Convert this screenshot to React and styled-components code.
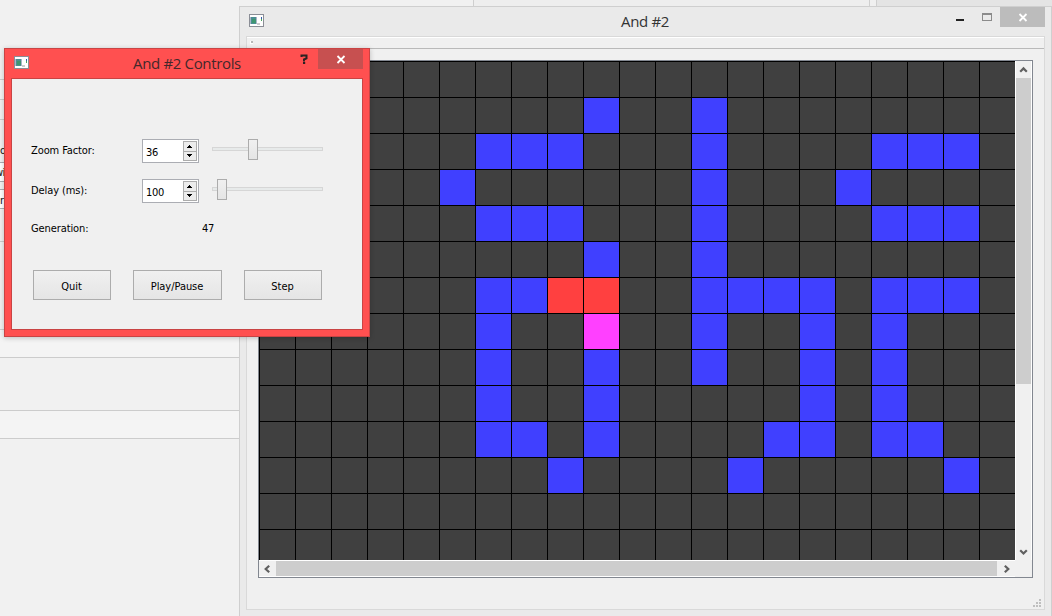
import React from "react";
import styled, { createGlobalStyle } from "styled-components";

const Global = createGlobalStyle`
  * { box-sizing: border-box; }
  body { margin: 0; overflow: hidden; font-family: "DejaVu Sans Condensed", "DejaVu Sans", sans-serif; }
`;

const Desktop = styled.main`
  position: relative;
  width: 1052px;
  height: 616px;
  overflow: hidden;
  background: #f1f1f1;
`;

const Backdrop = styled.div`
  display: flex;
  height: 7px;
`;
const TopStrip = styled.div`
  width: ${(p) => p.$w}px;
  height: 7px;
  background: ${(p) => p.$bg};
  border-right: ${(p) => (p.$line ? "1px solid #cfcfcf" : "0")};
`;
const SideColumn = styled.div`
  width: 240px;
`;
const SideBand = styled.div`
  height: ${(p) => p.$h}px;
  padding-top: ${(p) => p.$pad || 0}px;
  text-indent: ${(p) => p.$indent || 0}px;
  background: ${(p) => p.$bg || "#f1f1f1"};
  border-bottom: 1px solid ${(p) => p.$line || "#cccccc"};
  font-size: 11px;
  line-height: 14px;
  letter-spacing: -0.6px;
  color: #111;
  overflow: hidden;
`;

const Title = styled.div`
  flex: 1;
  text-align: center;
  font: 15px/20px "Open Sans", "Noto Sans", sans-serif;
  letter-spacing: -0.35px;
  color: ${(p) => p.$color || "#333"};
`;

const MainWindow = styled.section`
  position: absolute;
  left: 239px;
  top: 6px;
  width: 813px;
  height: 620px;
  padding: 0 7px;
  background: #eaeaea;
  border: 1px solid #cfcfcf;
`;
const MainTitleBar = styled.header`
  display: flex;
  height: 29px;
  margin: 0 -1px;
  padding-left: 3px;
`;
const IconSlot = styled.div`
  width: ${(p) => p.$w}px;
  padding-top: 7px;
`;
const MainTitleText = styled(Title)`
  padding-top: 4px;
`;
const Controls = styled.div`
  display: flex;
  width: 92px;
`;
const ControlButton = styled.div`
  width: ${(p) => p.$w}px;
  height: 20px;
  background: ${(p) => p.$bg || "transparent"};
  svg { display: block; }
`;
const Client = styled.div`
  width: 799px;
  height: 574px;
  margin-left: -1px;
  border: 1px solid #d9d9d9;
  background: #f0f0f0;
  display: flex;
  flex-direction: column;
`;
const ToolBar = styled.div`
  height: 12px;
  border-top: 1px solid #fff;
  border-bottom: 1px solid #b9b9b9;
  padding: 3px 0 0 3px;
`;
const Grip = styled.div`
  width: 3px;
  height: 3px;
  background: #b8b8b8;
  border-left: 1px solid #fff;
  border-bottom: 1px solid #fff;
`;
const View = styled.div`
  display: grid;
  grid-template-columns: 756px 17px;
  grid-template-rows: 499px 17px;
  width: 775px;
  height: 518px;
  margin: 11px 0 0 11px;
  border: 1px solid #828790;
  background: #f0f0f0;
`;
const Field = styled.div`
  display: grid;
  grid-template-columns: repeat(21, 36px);
  grid-auto-rows: 36px;
  overflow: hidden;
`;
const Cell = styled.div`
  border-left: 1px solid #000;
  border-top: 1px solid #000;
  background: ${(p) => p.$color};
`;
const VBar = styled.div`
  display: flex;
  flex-direction: column;
  border-left: 1px solid #fff;
  border-right: 1px solid #fff;
  svg { display: block; }
`;
const VThumb = styled.div`
  height: 306px;
  background: #cdcdcd;
`;
const VSpace = styled.div`
  flex: 1;
`;
const HBar = styled.div`
  display: flex;
  border-top: 1px solid #fff;
  border-bottom: 1px solid #fff;
  svg { display: block; }
`;
const HThumb = styled.div`
  width: 721px;
  background: #cdcdcd;
`;
const StatusBar = styled.div`
  flex: 1;
  display: flex;
  justify-content: flex-end;
  align-items: flex-end;
  padding: 0 3px 2px 0;
  svg { display: block; }
`;

const Dialog = styled.section`
  position: absolute;
  left: 4px;
  top: 48px;
  width: 366px;
  height: 289px;
  padding: 0 6px;
  background: #ff5050;
  border: 1px solid #c94444;
  box-shadow: 0 1px 5px rgba(0, 0, 0, 0.22);
`;
const DialogTitleBar = styled.header`
  display: flex;
  height: 29px;
  padding-left: 3px;
`;
const DialogTitleText = styled(Title)`
  padding-top: 4px;
`;
const DialogBody = styled.div`
  width: 352px;
  height: 252px;
  padding: 59px 0 0 19px;
  background: #f0f0f0;
  border: 1px solid #c94444;
`;
const FormRow = styled.div`
  display: flex;
  align-items: center;
  height: ${(p) => p.$h}px;
  margin-bottom: ${(p) => p.$gap}px;
`;
const Label = styled.label`
  width: 111px;
  font-size: 11px;
  line-height: 14px;
  letter-spacing: -0.1px;
  white-space: nowrap;
  color: #000;
`;
const Value = styled.span`
  padding-left: 60px;
  font-size: 11px;
  line-height: 14px;
  letter-spacing: -0.2px;
  color: #000;
`;
const Spin = styled.div`
  display: flex;
  width: 57px;
  height: 24px;
  padding: 1px;
  background: #fff;
  border: 1px solid #abadb3;
`;
const SpinText = styled.span`
  flex: 1;
  padding: 5px 0 0 2px;
  font-size: 11px;
  line-height: 14px;
  letter-spacing: -0.3px;
  color: #000;
`;
const SpinButtons = styled.div`
  display: flex;
  flex-direction: column;
  width: 14px;
  height: 20px;
  border: 1px solid #acacac;
  svg { display: block; }
`;
const SpinHalf = styled.div`
  flex: 1;
  display: flex;
  justify-content: center;
  align-items: center;
  padding-right: 1px;
  background: #ececec;
  border-bottom: ${(p) => (p.$line ? "1px solid #acacac" : "0")};
`;
const Slider = styled.div`
  display: flex;
  align-items: flex-start;
  width: 111px;
  height: 21px;
  margin: 0 0 3px 13px;
`;
const Track = styled.div`
  width: ${(p) => p.$w}px;
  height: 4px;
  margin-top: 8px;
  border: 1px solid #d6d6d6;
  border-${(p) => p.$open}: 0;
  background: #e7eaea;
`;
const Handle = styled.div`
  width: 10px;
  height: 21px;
  border: 1px solid #acacac;
  background: linear-gradient(#f0f0f0, #e5e5e5);
`;
const Buttons = styled.div`
  display: flex;
  gap: 22px;
  padding-left: 2px;
`;
const PushButton = styled.button`
  width: ${(p) => p.$w}px;
  height: 30px;
  padding: 3px 1px 0 0;
  font: 11px/14px "DejaVu Sans Condensed", "DejaVu Sans", sans-serif;
  letter-spacing: -0.05px;
  color: #000;
  border: 1px solid #acacac;
  border-radius: 0;
  background: linear-gradient(#f0f0f0, #e5e5e5);
`;

const WindowIcon = () => (
  <svg width="15" height="13" viewBox="0 0 15 13" display="block" shapeRendering="crispEdges">
    <rect width="15" height="13" fill="#8b8e96" />
    <rect x="1" y="1" width="13" height="11" fill="#fff" />
    <rect x="1" y="3" width="7" height="7" fill="#a9b4c8" />
    <rect x="2" y="3" width="5" height="7" fill="#4c8f92" />
    <rect x="3" y="5" width="4" height="4" fill="#3f9670" />
    <rect x="12" y="3" width="1" height="2" fill="#335ca8" />
    <rect x="12" y="5" width="1" height="2" fill="#49a65b" />
    <rect x="8" y="9" width="3" height="2" fill="#ccc" />
  </svg>
);
const CloseGlyph = ({ cx }) => (
  <svg width="45" height="20" viewBox="0 0 45 20">
    <path d={`M${cx - 3.5} 7l7 7M${cx + 3.5} 7l-7 7`} stroke="#fff" strokeWidth="1.8" />
  </svg>
);
const chevrons = {
  up: "M4.2 10.7L7.5 7.4L10.8 10.7",
  down: "M4.2 7.2L7.5 10.5L10.8 7.2",
  left: "M10.2 4.8L6.7 8L10.2 11.2",
  right: "M7.8 4.8L11.3 8L7.8 11.2",
};
const Chevron = ({ dir, w = 15, h = 17 }) => (
  <svg width={w} height={h} viewBox={`0 0 ${w} ${h}`}>
    <path d={chevrons[dir]} fill="none" stroke="#606060" strokeWidth="2.2" />
  </svg>
);
const Tri = ({ up }) => (
  <svg width="5" height="3" viewBox="0 0 5 3" shapeRendering="crispEdges">
    <path d={up ? "M2 0h1v1h1v1h1v1H0V2h1V1h1z" : "M0 0h5v1H4v1H3v1H2V2H1V1H0z"} fill="#000" />
  </svg>
);
const gripDots = [[6, 0], [3, 3], [6, 3], [0, 6], [3, 6], [6, 6]];

const colors = { ".": "#404040", b: "#4040ff", r: "#ff4040", m: "#ff40ff" };
const rows = [
  ".....................",
  ".........b..b........",
  "......bbb...b....bbb.",
  ".....b......b...b....",
  "......bbb...b....bbb.",
  ".........b..b........",
  "......bbrr..bbbb.bbb.",
  "......b..m..b..b.b...",
  "......b..b..b..b.b...",
  "......b..b.....b.b...",
  "......bb.b....bb.bb..",
  "........b....b.....b.",
  ".....................",
  ".....................",
];

const SpinBox = ({ value }) => (
  <Spin>
    <SpinText>{value}</SpinText>
    <SpinButtons>
      <SpinHalf $line><Tri up /></SpinHalf>
      <SpinHalf><Tri /></SpinHalf>
    </SpinButtons>
  </Spin>
);
const SliderControl = ({ at }) => (
  <Slider>
    <Track $w={at} $open="right" />
    <Handle />
    <Track $w={101 - at - 10 + 10 - 0} $open="left" />
  </Slider>
);

export default function App() {
  return (
    <>
      <Global />
      <Desktop>
        <Backdrop>
          <TopStrip $w={474} $bg="#f1f1f1" $line />
          <TopStrip $w={396} $bg="#eeeeee" $line />
          <TopStrip $w={7} $bg="#f0f0f0" $line />
          <TopStrip $w={175} $bg="#e4e4e4" />
        </Backdrop>
        <SideColumn>
          <SideBand $h={73} />
          <SideBand $h={20} $bg="#f4f4f4" />
          <SideBand $h={20} />
          <SideBand $h={43} $pad={24} $line="#abadb3">o</SideBand>
          <SideBand $h={19} $pad={3} $indent={-5} $bg="#fff" $line="#abadb3">wi</SideBand>
          <SideBand $h={8} $line="#abadb3" />
          <SideBand $h={19} $pad={4} $bg="#fff" $line="#abadb3">r</SideBand>
          <SideBand $h={33} />
          <SideBand $h={88} />
          <SideBand $h={28} $bg="#f4f4f4" />
          <SideBand $h={53} />
          <SideBand $h={28} $bg="#f4f4f4" />
        </SideColumn>

        <MainWindow>
          <MainTitleBar>
            <IconSlot $w={88}><WindowIcon /></IconSlot>
            <MainTitleText>And #2</MainTitleText>
            <Controls>
              <ControlButton $w={47}>
                <svg width="47" height="20" viewBox="0 0 47 20" shapeRendering="crispEdges">
                  <rect x="3" y="12" width="8" height="2" fill="#222" />
                  <path d="M29.5 6.5h9v7h-9zM29.5 7.5h9" fill="none" stroke="#8b8b8b" />
                </svg>
              </ControlButton>
              <ControlButton $w={45} $bg="#bcbcbc"><CloseGlyph cx={23} /></ControlButton>
            </Controls>
          </MainTitleBar>
          <Client>
            <ToolBar><Grip /></ToolBar>
            <View>
              <Field>
                {rows.flatMap((row, y) =>
                  [...row].map((c, x) => <Cell key={`${y}-${x}`} $color={colors[c]} />)
                )}
              </Field>
              <VBar>
                <Chevron dir="up" />
                <VThumb />
                <VSpace />
                <Chevron dir="down" />
              </VBar>
              <HBar>
                <Chevron dir="left" w={17} h={15} />
                <HThumb />
                <Chevron dir="right" w={17} h={15} />
              </HBar>
            </View>
            <StatusBar>
              <svg width="8" height="8" viewBox="0 0 8 8" shapeRendering="crispEdges">
                {gripDots.map(([x, y]) => (
                  <rect key={`${x}-${y}`} x={x} y={y} width="2" height="2" fill="#bfbfbf" />
                ))}
              </svg>
            </StatusBar>
          </Client>
        </MainWindow>

        <Dialog>
          <DialogTitleBar>
            <IconSlot $w={92}><WindowIcon /></IconSlot>
            <DialogTitleText $color="#45282b">And #2 Controls</DialogTitleText>
            <ControlButton $w={50}>
              <svg width="50" height="20" viewBox="0 0 50 20">
                <path d="M33.5 8V6.5h5v2.8L36 10.5V12.4M35 14h2.2" fill="none" stroke="#2b2222" strokeWidth="2" />
              </svg>
            </ControlButton>
            <ControlButton $w={45} $bg="#c75050"><CloseGlyph cx={23} /></ControlButton>
          </DialogTitleBar>
          <DialogBody>
            <FormRow $h={26} $gap={14}>
              <Label>Zoom Factor:</Label>
              <SpinBox value="36" />
              <SliderControl at={36} />
            </FormRow>
            <FormRow $h={26} $gap={12}>
              <Label>Delay (ms):</Label>
              <SpinBox value="100" />
              <SliderControl at={5} />
            </FormRow>
            <FormRow $h={26} $gap={28}>
              <Label>Generation:</Label>
              <Value>47</Value>
            </FormRow>
            <Buttons>
              <PushButton $w={78}>Quit</PushButton>
              <PushButton $w={89}>Play/Pause</PushButton>
              <PushButton $w={78}>Step</PushButton>
            </Buttons>
          </DialogBody>
        </Dialog>
      </Desktop>
    </>
  );
}
